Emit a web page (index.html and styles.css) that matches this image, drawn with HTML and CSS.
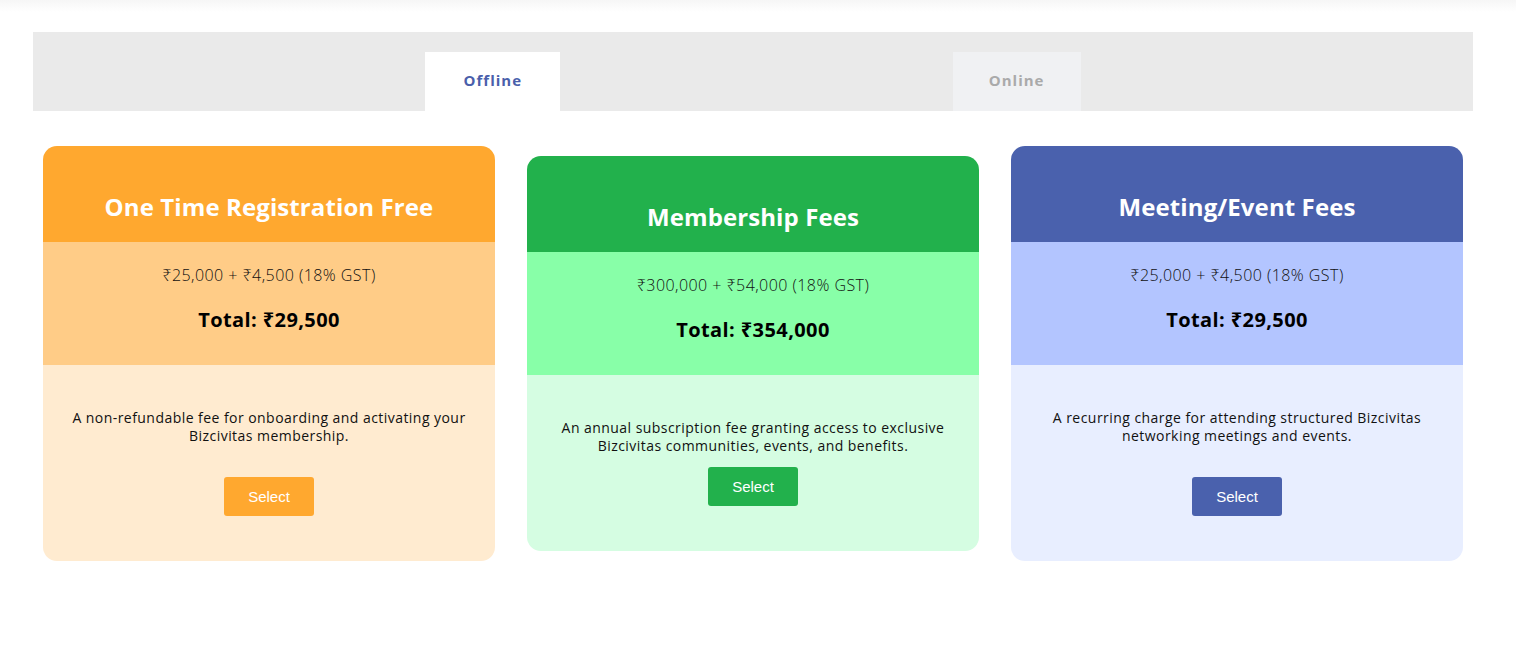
FILE: index.html
```html
<!DOCTYPE html>
<html lang="en">
<head>
<meta charset="utf-8">
<title>Fees</title>
<link rel="stylesheet" href="styles.css">
</head>
<body>
<div class="topbar"></div>
<main class="page">
  <nav class="tabs">
    <button class="tab tab-active">Offline</button>
    <button class="tab tab-idle">Online</button>
  </nav>
  <section class="cards">
    <article class="card card-orange">
      <header class="card-head"><h2>One Time Registration Free</h2></header>
      <div class="card-price">
        <p class="price-line">₹25,000 + ₹4,500 (18% GST)</p>
        <p class="price-total">Total: ₹29,500</p>
      </div>
      <div class="card-body">
        <p class="desc">A non-refundable fee for onboarding and activating your Bizcivitas membership.</p>
        <button class="select">Select</button>
      </div>
    </article>
    <article class="card card-green">
      <header class="card-head"><h2>Membership Fees</h2></header>
      <div class="card-price">
        <p class="price-line">₹300,000 + ₹54,000 (18% GST)</p>
        <p class="price-total">Total: ₹354,000</p>
      </div>
      <div class="card-body card-body-tight">
        <p class="desc">An annual subscription fee granting access to exclusive Bizcivitas communities, events, and benefits.</p>
        <button class="select">Select</button>
      </div>
    </article>
    <article class="card card-blue">
      <header class="card-head"><h2>Meeting/Event Fees</h2></header>
      <div class="card-price">
        <p class="price-line">₹25,000 + ₹4,500 (18% GST)</p>
        <p class="price-total">Total: ₹29,500</p>
      </div>
      <div class="card-body">
        <p class="desc desc-narrow">A recurring charge for attending structured Bizcivitas networking meetings and events.</p>
        <button class="select">Select</button>
      </div>
    </article>
  </section>
</main>
</body>
</html>
```
FILE: styles.css
```css
* { box-sizing: border-box; }
html, body { margin: 0; padding: 0; background: #fff; }
body { font-family: "Open Sans", "Noto Sans", sans-serif; color: #000; }

.topbar {
  height: 12px;
  background: linear-gradient(#f6f6f6, #fff);
}

.page { padding: 20px 43px 0 33px; }

.tabs {
  display: flex;
  justify-content: space-evenly;
  align-items: flex-end;
  background: #eaeaea;
  height: 79px;
}
.tab {
  border: 0;
  height: 59px;
  font-family: "Open Sans", sans-serif;
  font-weight: 700;
  font-size: 15px;
  letter-spacing: 1px;
  padding: 0 0 4px;
}
.tab-active { width: 135px; background: #fff; color: #4a5fab; }
.tab-idle { width: 128px; background: #f0f1f3; color: #aaaaaa; }

.cards {
  display: flex;
  align-items: center;
  gap: 32px;
  padding: 35px 10px 0;
}
.card {
  width: 452px;
  border-radius: 14px;
  overflow: hidden;
  text-align: center;
}
.card-head { height: 96px; padding-top: 45px; }
.card-head h2 {
  margin: 0;
  color: #fff;
  font-size: 24px;
  line-height: 32px;
  font-weight: 700;
  letter-spacing: 0.1px;
}
.card-price { height: 123px; padding-top: 22px; }
.price-line {
  margin: 0;
  font-size: 16px;
  line-height: 22px;
  font-weight: 300;
  letter-spacing: 0.45px;
  color: #111;
}
.price-total {
  margin: 21px 0 0;
  font-size: 20px;
  line-height: 26px;
  font-weight: 700;
  letter-spacing: 0.4px;
}
.card-body { padding: 44px 20px 45px; }
.desc {
  margin: 0 auto 32px;
  font-size: 14px;
  line-height: 18px;
  letter-spacing: 0.45px;
  color: #111;
  max-width: 412px;
}
.desc-narrow { max-width: 392px; }
.card-body-tight .desc { margin-bottom: 12px; }
.select {
  width: 90px;
  height: 39px;
  border: 0;
  border-radius: 3px;
  color: #fff;
  font-family: "Liberation Sans", Arial, sans-serif;
  font-size: 15px;
  padding: 0;
}

.card-orange .card-head { background: #ffa82f; }
.card-orange .card-price { background: #ffcc87; }
.card-orange .card-body { background: #ffebd0; }
.card-orange .select { background: #ffa82f; }

.card-green .card-head { background: #22b14c; }
.card-green .card-price { background: #88ffa8; }
.card-green .card-body { background: #d5fde2; }
.card-green .select { background: #22b14c; }

.card-blue .card-head { background: #4a61ad; }
.card-blue .card-price { background: #b3c5ff; }
.card-blue .card-body { background: #e8eeff; }
.card-blue .select { background: #4a61ad; }
```
